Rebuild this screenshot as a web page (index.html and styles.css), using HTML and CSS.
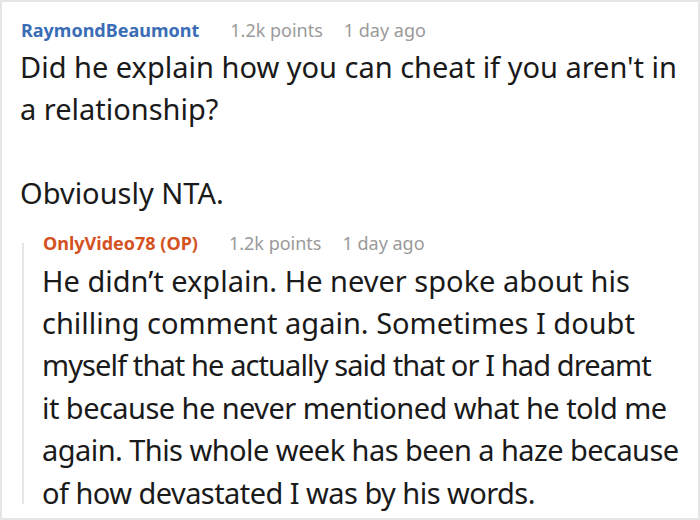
FILE: index.html
```html
<!DOCTYPE html>
<html>
<head>
<meta charset="utf-8">
<link rel="stylesheet" href="styles.css">
</head>
<body>
<div class="frame">
  <div class="comment">
    <div class="meta">
      <span class="user user-blue">RaymondBeaumont</span>
      <span class="info">1.2k points</span>
      <span class="info">1 day ago</span>
    </div>
    <div class="text">
      <p>Did he explain how you can cheat if you aren't in a relationship?</p>
      <p class="gap">Obviously NTA.</p>
    </div>
    <div class="reply">
      <div class="meta">
        <span class="user user-orange">OnlyVideo78 (OP)</span>
        <span class="info">1.2k points</span>
        <span class="info">1 day ago</span>
      </div>
      <div class="text reply-text">
        <p>He didn’t explain. He never spoke about his<br>chilling comment again. Sometimes I doubt<br><span class="tight">myself that he actually said that or I had dreamt</span><br><span class="snug">it because he never mentioned what he told me<br>again. This whole week has been a haze because<br>of how devastated I was by his words.</span></p>
      </div>
    </div>
  </div>
</div>
</body>
</html>
```
FILE: styles.css
```css
html, body {
  margin: 0;
  padding: 0;
  background: #ffffff;
}
.frame {
  box-sizing: border-box;
  width: 700px;
  height: 520px;
  border: 2px solid #e6e6e6;
  background: #fff;
  overflow: hidden;
  font-family: "Noto Sans", "Open Sans", sans-serif;
}
.comment {
  padding: 16px 6px 0 18px;
}
.meta {
  display: flex;
  align-items: baseline;
  font-size: 18px;
  line-height: 24px;
  margin-left: 1px;
}
.user {
  font-weight: bold;
  margin-right: 31px;
}
.user-blue { color: #3a6db6; }
.user-orange { color: #d4521f; }
.info {
  color: #9a9a9a;
  margin-right: 21px;
}
.text {
  font-size: 29px;
  line-height: 42px;
  color: #1a1a1a;
  margin-top: 4px;
}
.text p { margin: 0; }
.text .gap { margin-top: 42px; }
.reply {
  position: relative;
  margin-top: 17px;
  padding-left: 22px;
}
.reply::before {
  content: "";
  position: absolute;
  left: 2px;
  top: 12px;
  bottom: 10px;
  width: 2px;
  background: #e6e6e6;
}
.reply-text {
  line-height: 42.4px;
  margin-top: 4.5px;
  white-space: nowrap;
}
.tight {
  letter-spacing: -0.9px;
}
.snug {
  letter-spacing: -0.55px;
}
```
